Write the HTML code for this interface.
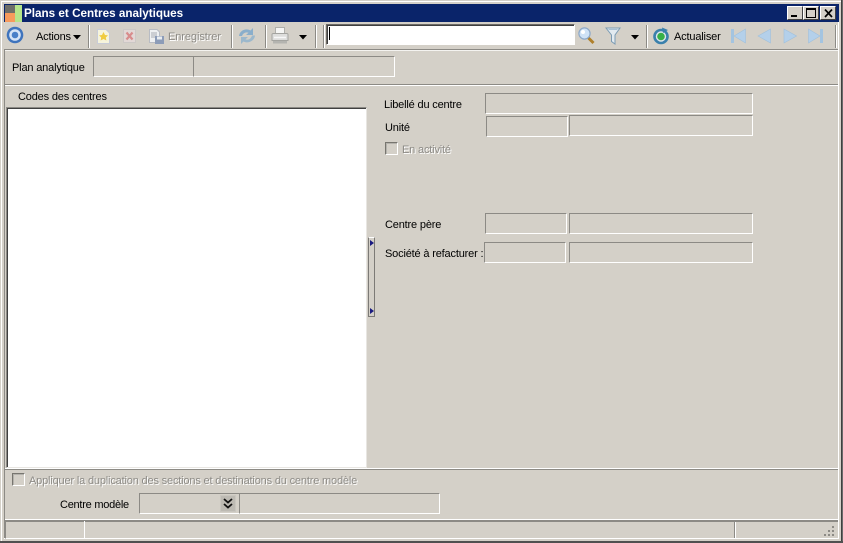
<!DOCTYPE html>
<html><head><meta charset="utf-8">
<style>
html,body{margin:0;padding:0;background:#d4d0c8}
#w{position:absolute;left:0;top:0;width:843px;height:543px;overflow:hidden;background:#d4d0c8;font:11px "Liberation Sans",sans-serif;letter-spacing:-.17px;color:#000}
#w div,#w span,#w svg{position:absolute}
.f{box-sizing:border-box;border:1px solid;border-color:#8c8a85 #fff #fff #8c8a85}
.t{white-space:nowrap;line-height:14px;margin-top:2px}
.d{color:#8d8b86;text-shadow:1px 1px 0 #fff}
.h{height:1px}
.v{width:1px}
.sep{width:1px;height:23px;top:25px;background:#8c8a85;box-shadow:1px 0 0 #fff}
.cb{box-sizing:border-box;width:13px;height:13px;border:1px solid;border-color:#77756f #fff #fff #77756f;box-shadow:inset 1px 1px 0 #b4b2ac}
.btn{box-sizing:border-box;width:16px;height:14px;border:1px solid;border-color:#fff #404040 #404040 #fff;background:#d4d0c8;top:6px}
</style></head><body>
<div id="w">
<!-- window frame -->
<div class="h" style="left:1px;top:1px;width:842px;background:#fff"></div>
<div class="v" style="left:1px;top:1px;height:541px;background:#fff"></div>
<div class="v" style="left:841px;top:0;height:543px;background:#404040"></div>
<div class="v" style="left:842px;top:0;height:543px;background:#6a6a6a"></div>
<div class="h" style="left:0;top:541px;width:843px;height:2px;background:#505050"></div>
<!-- title -->
<div style="left:4px;top:4px;width:835px;height:18px;background:#0a246a"></div>
<div style="left:5px;top:5px;width:17px;height:17px;background:#6e6e68"></div>
<div style="left:5px;top:13px;width:10px;height:9px;background:#f79a5c"></div>
<div style="left:15px;top:5px;width:7px;height:17px;background:#b5e58a"></div>
<div class="t" style="left:24px;top:5px;color:#fff;font-weight:bold;font-size:11.7px;letter-spacing:0">Plans et Centres analytiques</div>
<div class="btn" style="left:787px"><div style="left:3px;top:8px;width:6px;height:2px;background:#000"></div></div>
<div class="btn" style="left:803px"><div style="left:2px;top:1px;box-sizing:border-box;width:10px;height:10px;border:1px solid #000;border-top-width:2px"></div></div>
<div class="btn" style="left:820px"><svg style="left:3px;top:2px" width="10" height="9" viewBox="0 0 10 9"><path d="M1 0.5L8 8M8 0.5L1 8" stroke="#000" stroke-width="1.7" fill="none"/></svg></div>
<!-- toolbar -->
<svg style="left:6px;top:26px" width="18" height="18" viewBox="0 0 18 18"><circle cx="9" cy="9" r="8.300" fill="#3f74bd"/><circle cx="9" cy="9" r="5.800" fill="#d6e4f6"/><circle cx="9" cy="9" r="3.300" fill="#4a80c8"/></svg>
<div class="t" style="left:36px;top:28px">Actions</div>
<svg style="left:73px;top:35px" width="9" height="5"><path d="M0 0H8L4 4.500Z" fill="#000"/></svg>
<div class="sep" style="left:88px"></div>
<svg style="left:96px;top:28px" width="15" height="17" viewBox="0 0 15 17"><path d="M1.500 1.500H10L13.500 5V15.500H1.500Z" fill="#f6f4dc" stroke="#c8ccd8"/><path d="M7.500 4l1.500 3 3 .4-2.200 2.100.6 3-2.900-1.500-2.900 1.500.6-3L3 7.400l3-.4Z" fill="#f0cc40"/></svg>
<svg style="left:122px;top:28px" width="15" height="16" viewBox="0 0 15 16"><rect x="1.500" y="1.500" width="12" height="13" fill="#e2d8d6" stroke="#ccc8c6"/><path d="M4.500 4.500L10.500 11.500M10.500 4.500L4.500 11.500" stroke="#d88c8c" stroke-width="2.200"/></svg>
<svg style="left:148px;top:28px" width="17" height="17" viewBox="0 0 17 17"><path d="M1.500 1.500H9L11.500 4V14.500H1.500Z" fill="#eef0f2" stroke="#b8bcc4"/><path d="M3 5H9M3 7H9M3 9H8" stroke="#a8acb4"/><rect x="7" y="8" width="9" height="8" fill="#8c9cb8"/><rect x="9" y="8.500" width="5" height="3" fill="#e8ecf0"/></svg>
<div class="t d" style="left:168px;top:28px;letter-spacing:-.08px">Enregistrer</div>
<div class="sep" style="left:231px"></div>
<svg style="left:238px;top:27px" width="18" height="18" viewBox="0 0 18 18"><path d="M1 9C1.500 3.500 8 0.500 12.500 3.500L15 1V8H8L10.500 5.800C8 4.500 5 6 4 9Z" fill="#8aaecb"/><path d="M17 8.500C16.500 14 10 17 5.500 14.500L3 17V10H10L7.500 12.200C10 13.500 13 12 14 8.500Z" fill="#9cb8cc"/></svg>
<div class="sep" style="left:265px"></div>
<svg style="left:271px;top:27px" width="18" height="18" viewBox="0 0 18 18"><path d="M4.500 0.500H13.500V7H4.500Z" fill="#f6f6f4" stroke="#b0b0ac"/><path d="M1 7.500Q1 6.500 2.500 6.500H15.500Q17 6.500 17 7.500V13.500H1Z" fill="#dededc" stroke="#a4a4a0"/><path d="M2 14H16V16.500H2Z" fill="#b4b4b0"/><path d="M3 10.500H15" stroke="#f8f8f8" stroke-width="1.500"/></svg>
<svg style="left:299px;top:35px" width="9" height="5"><path d="M0 0H8L4 4.500Z" fill="#000"/></svg>
<div class="sep" style="left:315px"></div>
<div class="sep" style="left:323px"></div>
<!-- search box -->
<div style="box-sizing:border-box;left:326px;top:24px;width:249px;height:21px;background:#fff;border:1px solid;border-color:#6c6a66 #fff #fff #6c6a66;box-shadow:inset 1px 1px 0 #404040"></div>
<div style="left:329px;top:27px;width:1px;height:13px;background:#000"></div>
<svg style="left:578px;top:27px" width="17" height="18" viewBox="0 0 17 18"><path d="M10 10.500L15.500 16" stroke="#b0802c" stroke-width="3"/><circle cx="6.500" cy="6.500" r="5.600" fill="#cfe2f6" stroke="#8ca8c8" stroke-width="1.200"/><circle cx="5" cy="5" r="2" fill="#fff"/></svg>
<svg style="left:605px;top:27px" width="16" height="18" viewBox="0 0 16 18"><path d="M1 1H15L10 8V17L6.500 14.500V8Z" fill="#e2eaf0" stroke="#7c9cb4"/><path d="M3.500 2.500H12.500" stroke="#a8c0d4"/></svg>
<svg style="left:631px;top:35px" width="9" height="5"><path d="M0 0H8L4 4.500Z" fill="#000"/></svg>
<div class="sep" style="left:646px"></div>
<svg style="left:652px;top:27px" width="18" height="18" viewBox="0 0 18 18"><circle cx="9" cy="9.500" r="6.500" fill="#dfe6ec" stroke="#3a80ac" stroke-width="2.600"/><path d="M10 0.500L16 3L11 6Z" fill="#3a80ac"/><circle cx="9" cy="9.500" r="3.800" fill="#38b048"/></svg>
<div class="t" style="left:674px;top:28px">Actualiser</div>
<svg style="left:730px;top:28px" width="16" height="16" viewBox="0 0 16 16"><rect x="1" y="1" width="3" height="14" fill="#a4c4e0"/><path d="M15.500 1V15L4 8Z" fill="#b4d0ea" stroke="#a0c0dc" stroke-width=".6"/></svg>
<svg style="left:757px;top:28px" width="14" height="16" viewBox="0 0 14 16"><path d="M13.500 1V15L1 8Z" fill="#b4d0ea" stroke="#a0c0dc" stroke-width=".6"/></svg>
<svg style="left:783px;top:28px" width="14" height="16" viewBox="0 0 14 16"><path d="M1 1V15L13.500 8Z" fill="#b4d0ea" stroke="#a0c0dc" stroke-width=".6"/></svg>
<svg style="left:808px;top:28px" width="16" height="16" viewBox="0 0 16 16"><path d="M0.500 1V15L12 8Z" fill="#b4d0ea" stroke="#a0c0dc" stroke-width=".6"/><rect x="12" y="1" width="3" height="14" fill="#a4c4e0"/></svg>
<div class="sep" style="left:835px"></div>
<!-- horizontal rules -->
<div class="h" style="left:4px;top:49px;width:835px;background:#8c8a85"></div>
<div class="h" style="left:4px;top:50px;width:835px;background:#f4f3f0"></div>
<div class="h" style="left:4px;top:84px;width:835px;background:#8c8a85"></div>
<div class="h" style="left:4px;top:85px;width:835px;background:#fff"></div>
<div class="h" style="left:4px;top:468px;width:835px;background:#fff"></div>
<div class="h" style="left:4px;top:469px;width:835px;background:#8c8a85"></div>
<div class="h" style="left:4px;top:519px;width:835px;background:#fff"></div>
<div class="h" style="left:4px;top:520px;width:835px;background:#8c8a85"></div>
<div class="h" style="left:4px;top:538px;width:835px;background:#fff"></div>
<div class="v" style="left:4px;top:50px;height:488px;background:#8c8a85"></div>
<div class="v" style="left:838px;top:22px;height:517px;background:#fff"></div>
<!-- plan -->
<div class="t" style="left:12px;top:59px">Plan analytique</div>
<div class="f" style="left:93px;top:56px;width:101px;height:21px"></div>
<div class="f" style="left:193px;top:56px;width:202px;height:21px"></div>
<!-- list -->
<div class="t" style="left:18px;top:88px">Codes des centres</div>
<div style="box-sizing:border-box;left:6px;top:107px;width:361px;height:361px;background:#fff;border:1px solid;border-color:#8c8a85 #e8e6e2 #e8e6e2 #8c8a85;box-shadow:inset 1px 1px 0 #404040"></div>
<!-- splitter -->
<div style="box-sizing:border-box;left:368px;top:237px;width:7px;height:80px;border:1px solid;border-color:#fff #7c7a76 #7c7a76 #7c7a76"></div>
<svg style="left:370px;top:240px" width="4" height="6"><path d="M0 0L4 3L0 6Z" fill="#1a1a80"/></svg>
<svg style="left:370px;top:308px" width="4" height="6"><path d="M0 0L4 3L0 6Z" fill="#1a1a80"/></svg>
<!-- right fields -->
<div class="t" style="left:384px;top:96px">Libellé du centre</div>
<div class="f" style="left:485px;top:93px;width:268px;height:21px"></div>
<div class="t" style="left:385px;top:119px">Unité</div>
<div class="f" style="left:486px;top:116px;width:82px;height:21px"></div>
<div class="f" style="left:569px;top:115px;width:184px;height:21px"></div>
<div class="cb" style="left:385px;top:142px"></div>
<div class="t d" style="left:402px;top:141px">En activité</div>
<div class="t" style="left:385px;top:216px">Centre père</div>
<div class="f" style="left:485px;top:213px;width:82px;height:21px"></div>
<div class="f" style="left:569px;top:213px;width:184px;height:21px"></div>
<div class="t" style="left:385px;top:245px">Société à refacturer :</div>
<div class="f" style="left:484px;top:242px;width:82px;height:21px"></div>
<div class="f" style="left:569px;top:242px;width:184px;height:21px"></div>
<!-- bottom -->
<div class="cb" style="left:12px;top:473px"></div>
<div class="t d" style="left:29px;top:472px">Appliquer la duplication des sections et destinations du centre modèle</div>
<div class="t" style="left:60px;top:496px;letter-spacing:-.25px">Centre modèle</div>
<div class="f" style="left:139px;top:493px;width:101px;height:21px"></div>
<div class="f" style="left:239px;top:493px;width:201px;height:21px"></div>
<div style="box-sizing:border-box;left:220px;top:495px;width:16px;height:17px;background:#bdbab3;border:1px solid #c9c6bf"></div>
<svg style="left:223px;top:498px" width="10" height="11" viewBox="0 0 10 11"><path d="M1 1L5 4.500L9 1M1 6L5 9.500L9 6" stroke="#111" stroke-width="1.800" fill="none"/></svg>
<!-- status -->
<div class="f" style="left:5px;top:521px;width:80px;height:18px;border-right:none"></div>
<div class="v" style="left:84px;top:521px;height:17px;background:#fff"></div>
<div class="h" style="left:85px;top:521px;width:650px;background:#8c8a85"></div>
<div class="v" style="left:734px;top:521px;height:17px;background:#8c8a85"></div>
<div class="v" style="left:735px;top:521px;height:17px;background:#fff"></div>
<div class="h" style="left:735px;top:521px;width:103px;background:#8c8a85"></div>
<svg style="left:824px;top:526px" width="12" height="12"><g fill="#8c8a85"><rect x="8" y="0" width="2" height="2"/><rect x="4" y="4" width="2" height="2"/><rect x="8" y="4" width="2" height="2"/><rect x="0" y="8" width="2" height="2"/><rect x="4" y="8" width="2" height="2"/><rect x="8" y="8" width="2" height="2"/></g></svg>
</div>
</body></html>
